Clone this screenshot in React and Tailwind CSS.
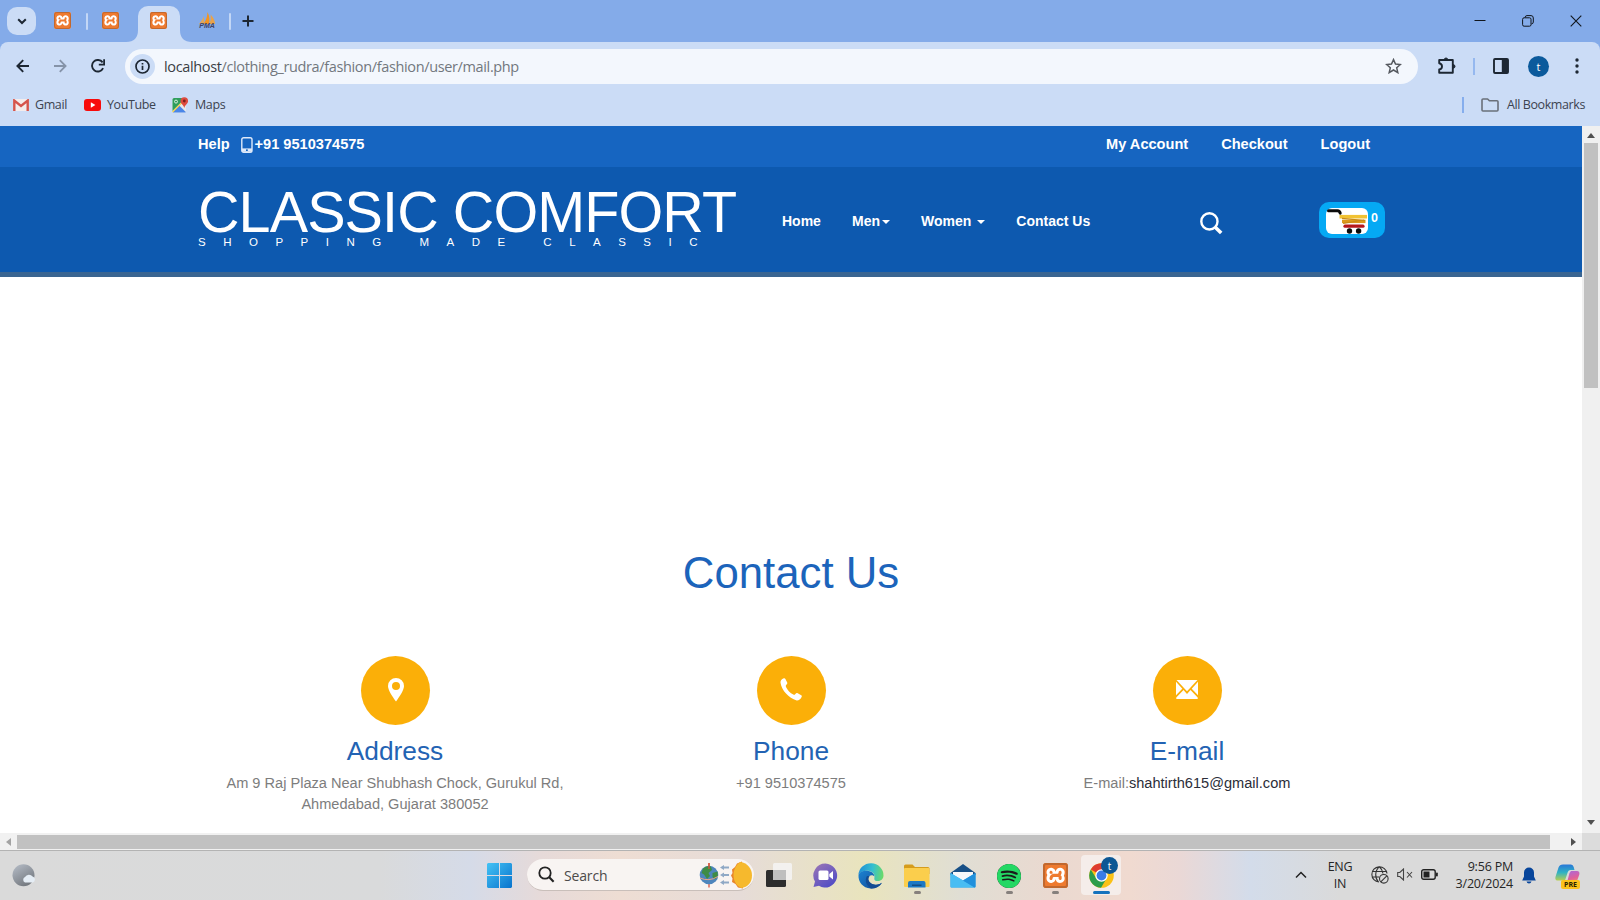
import { SiXampp, SiSpotify } from "react-icons/si";

function XamppIcon({ className, frame = "border" }) {
  return (
    <div className={`relative shrink-0 rounded-[3px] bg-white ${className}`}>
      <SiXampp className="block h-full w-full text-[#ee7a2f]" />
      <div className={`absolute inset-0 rounded-[3px] border-[#c0682f] ${frame}`} />
    </div>
  );
}

function PmaIcon() {
  return (
    <div className="flex h-[18px] w-[20px] flex-col items-center justify-end">
      <svg width="18" height="12" viewBox="0 0 18 12" className="-mb-px block shrink-0">
        <path d="M1 12 Q5 7 5.800 4 L6.500 12Z" fill="#e2a85c" />
        <path d="M5.500 12 Q9.500 6 9.500 0 Q12.500 6 11 12Z" fill="#f5941f" />
        <path d="M11.500 12 Q13.500 7 12.600 2.500 Q16.800 7 17 12Z" fill="#e9a24a" />
      </svg>
      <span className="font-['Liberation_Sans'] text-[7px] leading-[6px] font-bold italic text-[#3f4468]">PMA</span>
    </div>
  );
}

function TabStrip() {
  return (
    <div className="flex h-[42px] items-start bg-[#84abe9]">
      <div className="mt-[7px] ml-[7px] flex h-[28px] w-[29px] shrink-0 items-center justify-center rounded-[10px] bg-[#cbdcf6]">
        <svg width="10" height="7" viewBox="0 0 10 7" fill="none" stroke="#1d2733" strokeWidth="2">
          <path d="M1.2 1.2 L5 5 L8.8 1.2" />
        </svg>
      </div>
      <XamppIcon className="mt-[12px] ml-[18px] h-[17px] w-[17px]" />
      <div className="mt-[13px] ml-[15px] h-[17px] w-[2px] rounded bg-[#c3d7f6]" />
      <XamppIcon className="mt-[12px] ml-[14px] h-[17px] w-[17px]" />
      <div className="mt-[6px] ml-[7px] flex h-[36px] items-end">
        <svg width="12" height="12" viewBox="0 0 12 12" className="block"><path d="M12 0 V12 H0 Q12 12 12 0Z" fill="#cbdcf6" /></svg>
        <div className="flex h-[36px] w-[42px] justify-center rounded-t-[10px] bg-[#cbdcf6] pt-[6px] pr-[1px]">
          <XamppIcon className="h-[17px] w-[17px]" />
        </div>
        <svg width="12" height="12" viewBox="0 0 12 12" className="block"><path d="M0 0 V12 H12 Q0 12 0 0Z" fill="#cbdcf6" /></svg>
      </div>
      <div className="mt-[11px] ml-[5px]"><PmaIcon /></div>
      <div className="mt-[13px] ml-[12px] h-[17px] w-[2px] rounded bg-[#c3d7f6]" />
      <svg width="12" height="12" viewBox="0 0 12 12" className="mt-[15px] ml-[11px]" stroke="#1d2733" strokeWidth="2">
        <path d="M6 0.5V11.5M0.5 6H11.5" />
      </svg>
      <div className="mt-[15px] mr-[18px] ml-auto flex items-center gap-[36px]">
        <svg width="12" height="12" viewBox="0 0 12 12" stroke="#10151c"><path d="M0.5 5.5H11.5" /></svg>
        <svg width="12" height="12" viewBox="0 0 12 12" fill="none" stroke="#10151c">
          <rect x="0.6" y="2.8" width="8.4" height="8.4" rx="1.5" />
          <path d="M3 2.6 Q3.2 0.6 5 0.6 H9 Q11.3 0.6 11.3 3 V7 Q11.3 8.8 9.4 9" />
        </svg>
        <svg width="12" height="12" viewBox="0 0 12 12" stroke="#10151c" strokeWidth="1.1"><path d="M0.7 0.7 L11.3 11.3M11.3 0.7 L0.7 11.3" /></svg>
      </div>
    </div>
  );
}

function Toolbar() {
  return (
    <div className="flex h-[48px] items-center bg-[#cbdcf6]">
      <svg width="13" height="14" viewBox="0 0 13 14" className="ml-[16px]" fill="none" stroke="#1d2733" strokeWidth="1.9">
        <path d="M13 7H1.6M7.2 1.2L1.4 7L7.2 12.8" />
      </svg>
      <svg width="13" height="14" viewBox="0 0 13 14" className="ml-[25px]" fill="none" stroke="#8593a8" strokeWidth="1.8">
        <path d="M0 7H11.4M5.8 1.2L11.6 7L5.8 12.8" />
      </svg>
      <svg width="14" height="14" viewBox="0 0 14 14" className="ml-[24px]" fill="none" stroke="#1d2733" strokeWidth="1.9">
        <path d="M12.1 9.2A5.8 5.8 0 1 1 11.6 3.4" />
        <path d="M13.1 0.2V5.6H7.8" strokeWidth="1.8" />
      </svg>
      <div className="ml-[20px] flex h-[35px] w-[1293px] items-center rounded-full bg-[#f3f7fd]">
        <div className="ml-[5px] flex h-[25px] w-[25px] items-center justify-center rounded-full bg-[#cbdcf6]">
          <svg width="15" height="15" viewBox="0 0 15 15" fill="none" stroke="#1d2733">
            <circle cx="7.5" cy="7.5" r="6.5" strokeWidth="1.7" />
            <path d="M7.5 6.7V11M7.5 3.9V5.5" strokeWidth="1.7" />
          </svg>
        </div>
        <span className="mt-[1px] ml-[9px] text-[14.5px] leading-5 tracking-[-0.36px] whitespace-nowrap text-[#72777e]">
          <span className="text-[#3a3e44]">localhost</span>/clothing_rudra/fashion/fashion/user/mail.php
        </span>
        <svg width="17" height="16" viewBox="0 0 17 16" className="mr-[16px] ml-auto" fill="none" stroke="#55595f" strokeWidth="1.5">
          <path d="M8.5 1.6L10.5 6.1L15.4 6.5L11.7 9.8L12.8 14.6L8.5 12L4.2 14.6L5.3 9.8L1.6 6.5L6.5 6.1Z" />
        </svg>
      </div>
      <svg width="18" height="18" viewBox="0 0 18 18" className="ml-[20px]" fill="none" stroke="#1d2733" strokeWidth="1.9" strokeLinejoin="round">
        <path d="M1.2 3H14.8V15.8H1.2V12.5Q4 12 4 9.4Q4 6.8 1.2 6.2Z" />
        <path d="M6.2 2.6Q6.4 1 8 1Q9.6 1 9.8 2.6Z M15.2 7.6Q17 7.8 17 9.4Q17 11 15.2 11.2Z" fill="#1d2733" strokeWidth="1" />
      </svg>
      <div className="ml-[17px] h-[17px] w-[2px] bg-[#95b8ef]" />
      <svg width="16" height="16" viewBox="0 0 16 16" className="ml-[18px]">
        <rect x="1" y="1" width="14" height="14" rx="1" fill="none" stroke="#1d2733" strokeWidth="1.9" />
        <rect x="8.8" y="1" width="6.2" height="14" fill="#1d2733" />
      </svg>
      <div className="ml-[19px] flex h-[21px] w-[21px] items-center justify-center rounded-full bg-[#0b5a9c] text-[11px] leading-none text-white">t</div>
      <svg width="4" height="16" viewBox="0 0 4 16" className="ml-[26px]" fill="#1d2733">
        <circle cx="2" cy="2" r="1.7" /><circle cx="2" cy="8" r="1.7" /><circle cx="2" cy="14" r="1.7" />
      </svg>
    </div>
  );
}

function Bookmarks() {
  return (
    <div className="flex h-[36px] items-center bg-[#cbdcf6] pb-[6px] text-[12.5px] leading-4 tracking-[-0.4px] text-[#3c4350]">
      <svg width="16" height="12" viewBox="0 0 16 12" className="ml-[13px]">
        <rect x="0" y="0" width="16" height="12" rx="1" fill="#f4ecec" />
        <path d="M1.3 12V1.6L8 7L14.7 1.6V12" fill="none" stroke="#d5544c" strokeWidth="2.4" />
      </svg>
      <span className="ml-[6px] w-[49px]">Gmail</span>
      <svg width="17" height="12" viewBox="0 0 17 12" className="block">
        <rect width="17" height="12" rx="3" fill="#f80b0b" />
        <path d="M6.8 3.3V8.7L11.4 6Z" fill="#fff" />
      </svg>
      <span className="ml-[6px] w-[65px]">YouTube</span>
      <svg width="17" height="16" viewBox="0 0 17 16">
        <rect x="0.5" y="1" width="13.5" height="14.5" rx="1.5" fill="#e6e9ea" />
        <path d="M0.5 2.5Q0.5 1 2 1H10L9.5 5L0.5 14Z" fill="#2f9e5c" />
        <path d="M0.8 15L7.2 8.5L13.8 15Q13.4 15.5 12.8 15.5H2Q1 15.5 0.8 15Z" fill="#4a86e8" />
        <path d="M0.5 15L11 4.5" stroke="#f5d04a" strokeWidth="1.2" />
        <path d="M12.3 0.2A3.8 3.8 0 0 1 16.1 4C16.1 6.5 13.2 7.6 12.3 11C11.4 7.6 8.5 6.5 8.5 4A3.8 3.8 0 0 1 12.3 0.2Z" fill="#dd4b3e" />
        <circle cx="12.3" cy="4" r="1.4" fill="#7c2019" />
        <circle cx="4" cy="4.6" r="1.5" fill="none" stroke="#e9f4ec" strokeWidth="0.9" />
      </svg>
      <span className="ml-[6px]">Maps</span>
      <div className="mr-[17px] ml-auto h-[16px] w-[2px] bg-[#86aeed]" />
      <svg width="18" height="14" viewBox="0 0 18 14" fill="none" stroke="#6a707a" strokeWidth="1.6" strokeLinejoin="round">
        <path d="M1 12V2Q1 1 2 1H6.6L8.4 2.8H16Q17 2.8 17 3.8V12Q17 13 16 13H2Q1 13 1 12Z" />
      </svg>
      <span className="mr-[15px] ml-[8px]">All Bookmarks</span>
    </div>
  );
}

function Caret({ className }) {
  return (
    <svg width="8" height="4" viewBox="0 0 8 4" className={className}><path d="M0 0H8L4 4Z" fill="#fff" /></svg>
  );
}

function SiteHeader() {
  return (
    <>
      <div className="flex h-[41px] items-center bg-[#1665c1] pb-[3px] pl-[198px] text-[14.58px] font-bold text-white">
        <span>Help</span>
        <svg width="12" height="16" viewBox="0 0 12 16" className="ml-[11px]">
          <rect x="0.8" y="0.8" width="10.200" height="14.4" rx="1.8" fill="none" stroke="#dfeafa" strokeWidth="1.4" />
          <path d="M1 11.4H11V14.8H1Z" fill="#dfeafa" />
          <rect x="5" y="12.4" width="1.8" height="1.6" fill="#1665c1" />
        </svg>
        <span className="ml-[2px]">+91 9510374575</span>
        <div className="mr-[212px] ml-auto flex gap-[33px]">
          <span>My Account</span>
          <span>Checkout</span>
          <span>Logout</span>
        </div>
      </div>
      <div className="flex h-[110px] items-start border-b-[5px] border-[#3a6591] bg-[#0d59af] pl-[198px] text-[14px] font-bold text-white">
        <div className="w-[584px] pt-[18px] font-normal">
          <div className="text-[57.5px] leading-[54px] tracking-[-0.9px] whitespace-nowrap">CLASSIC COMFORT</div>
          <div className="-mt-[4px] text-[11.5px] leading-[14px] tracking-[17.5px] whitespace-nowrap">SHOPPING MADE CLASSIC</div>
        </div>
        <nav className="flex items-center pt-[44px] leading-[20px]">
          <span className="w-[70px]">Home</span>
          <span>Men</span>
          <Caret className="mt-[2px] ml-[2px]" />
          <span className="ml-[31px]">Women</span>
          <Caret className="mt-[2px] ml-[6px]" />
          <span className="ml-[31px]">Contact Us</span>
        </nav>
        <svg width="23" height="23" viewBox="0 0 23 23" className="mt-[45px] ml-[110px]" fill="none" stroke="#fff">
          <circle cx="9.4" cy="9.4" r="8.1" strokeWidth="2.4" />
          <path d="M15 15L21.2 21" strokeWidth="3.6" />
        </svg>
        <div className="mt-[35px] mr-[197px] ml-auto flex h-[36px] w-[66px] items-center rounded-[10px] bg-[#05a9f4] pt-[2px] pl-[7px]">
          <svg width="42" height="26" viewBox="0 0 42 26">
            <rect width="42" height="26" rx="6" fill="#fff" />
            <path d="M2.5 2.7H11.5Q13.6 2.8 14.2 5.2" fill="none" stroke="#0c0c0c" strokeWidth="3" strokeLinecap="round" />
            <path d="M13.5 8.7H41" stroke="#f1c232" strokeWidth="3.6" />
            <path d="M16 13.4H39.5" stroke="#dc9a1c" strokeWidth="3.4" />
            <path d="M16 10.4L39 12.6M17 15.4L38 12" stroke="#c98a16" strokeWidth="1.2" />
            <path d="M19 18.2H37" stroke="#b5171c" strokeWidth="3.2" strokeLinecap="round" />
            <circle cx="23.5" cy="23" r="2.7" fill="#0c0c0c" /><circle cx="32.6" cy="23" r="2.7" fill="#0c0c0c" />
          </svg>
          <span className="-mt-[6px] ml-[3px] text-[12.5px]">0</span>
        </div>
      </div>
    </>
  );
}

function ContactCard({ icon, title, children }) {
  return (
    <div className="flex w-[396px] flex-col items-center text-center">
      <div className="flex h-[69px] w-[69px] items-center justify-center rounded-full bg-[#fbaf08] pb-[2px]">{icon}</div>
      <h2 className="mt-[11px] text-[26.3px] leading-[30px] text-[#2363b3]">{title}</h2>
      <p className="mt-[7px] text-[14.58px] leading-[21px] text-[#7d7d7d]">{children}</p>
    </div>
  );
}

function SitePage() {
  return (
    <div className="flex w-[1582px] flex-col bg-white font-['Liberation_Sans',sans-serif]">
      <SiteHeader />
      <h1 className="mt-[271px] text-center text-[43.75px] leading-[50px] text-[#1c64bb]">Contact Us</h1>
      <div className="mt-[58px] flex justify-center">
        <ContactCard
          title="Address"
          icon={
            <svg width="16" height="24" viewBox="0 0 16 24" className="ml-[1px]">
              <path fillRule="evenodd" d="M8 0A8 8 0 0 1 16 8C16 12 12 18 8 23.500C4 18 0 12 0 8A8 8 0 0 1 8 0ZM8 4A4 4 0 1 0 8 12A4 4 0 1 0 8 4Z" fill="#fff" />
            </svg>
          }
        >
          Am 9 Raj Plaza Near Shubhash Chock, Gurukul Rd,<br />Ahmedabad, Gujarat 380052
        </ContactCard>
        <ContactCard
          title="Phone"
          icon={
            <svg width="22" height="23" viewBox="0 0 22 23" className="-ml-[1px]">
              <path d="M3.800 0.300C4.600 0 5 0.300 5.400 1L7.200 4.500C7.500 5.300 7.200 6 6.300 6.700C5.700 7.300 5.700 8 6 8.900C7.500 12.200 10.200 14.800 13.300 16.500C14.200 17 14.700 16.800 15.400 15.900C16.200 15 16.900 14.900 17.700 15.300L21.200 17.200C21.900 17.600 22 18.200 21.600 19C20.600 21.200 18.700 22.700 16.700 22.500C8.600 19.900 1.800 12.700 0.500 4.800C0.300 2.800 1.500 1 3.800 0.300Z" fill="#fff" />
            </svg>
          }
        >
          +91 9510374575
        </ContactCard>
        <ContactCard
          title="E-mail"
          icon={
            <svg width="22" height="19" viewBox="0 0 22 19" fill="#fff">
              <path d="M0.500 0H21.500L11 11.300Z" />
              <path d="M0 1.700L6.300 8.700L0 15.300Z" />
              <path d="M22 1.700L15.700 8.700L22 15.300Z" />
              <path d="M0.300 17.600L7.500 10.100L11 14L14.500 10.100L21.700 17.600V19H0.300Z" />
            </svg>
          }
        >
          E-mail:<span className="text-[#2b2d38]">shahtirth615@gmail.com</span>
        </ContactCard>
      </div>
    </div>
  );
}

function Scrollbars() {
  return (
    <div className="flex w-[18px] flex-col items-center bg-[#f0f0f0]">
      <svg width="8" height="5" viewBox="0 0 8 5" className="mt-[7px] shrink-0"><path d="M0 5H8L4 0Z" fill="#505050" /></svg>
      <div className="mt-[5px] h-[245px] w-[14px] bg-[#c1c1c1]" />
      <svg width="8" height="5" viewBox="0 0 8 5" className="mt-auto mb-[8px] shrink-0"><path d="M0 0H8L4 5Z" fill="#505050" /></svg>
    </div>
  );
}

function TaskItem({ children, running }) {
  return (
    <div className="flex h-full w-[46px] flex-col items-center pt-[12px]">
      <div className="flex h-[25px] items-center">{children}</div>
      {running && <div className="mt-[3px] h-[3px] w-[7px] rounded-full bg-[#86807d]" />}
    </div>
  );
}

function Taskbar() {
  return (
    <div className="flex h-[50px] shrink-0 items-start border-t border-[#b3b3b3] bg-[linear-gradient(90deg,#dadada_0px,#d9dadb_380px,#d5dbe8_470px,#e6dad9_540px,#eeddd3_620px,#e6dcd8_740px,#e9e4bd_865px,#e0ded4_960px,#ead9d0_1050px,#f0dad0_1130px,#ead8d6_1180px,#d3dcea_1250px,#dadada_1340px,#dadada_1600px)]">
      <svg width="25" height="23" viewBox="0 0 25 23" className="mt-[13px] ml-[12px]">
        <defs><linearGradient id="moon" x1="0" y1="0" x2="0.6" y2="1"><stop stopColor="#b7bec9" /><stop offset="1" stopColor="#74797f" /></linearGradient></defs>
        <circle cx="11.5" cy="11.3" r="11" fill="url(#moon)" />
        <path d="M13 18.5A3 3 0 0 1 13 13A4.6 4.6 0 0 1 20.6 12.5A3.2 3.2 0 0 1 21 18.5Z" fill="#e5edf5" />
      </svg>
      <svg width="25" height="25" viewBox="0 0 25 25" className="mt-[12px] ml-[450px]">
        <defs><linearGradient id="win" x1="0" y1="0" x2="1" y2="1"><stop stopColor="#44c3f5" /><stop offset="1" stopColor="#0873cd" /></linearGradient></defs>
        <path d="M1 0H12V12H0V1ZM13 0H24L25 1V12H13ZM0 13H12V25H1L0 24ZM13 13H25V24L24 25H13Z" fill="url(#win)" />
      </svg>
      <div className="mt-[8px] ml-[15px] flex h-[32px] w-[227px] items-center rounded-full border-b border-[#c9bfba] bg-[#f8f4f2]">
        <svg width="17" height="17" viewBox="0 0 17 17" className="ml-[11px]" fill="none" stroke="#222" strokeWidth="1.8">
          <circle cx="7" cy="7" r="5.7" /><path d="M11 11L15.6 15.8" strokeWidth="2.1" />
        </svg>
        <span className="mt-[2px] ml-[9px] text-[14px] leading-5 tracking-[-0.15px] text-[#4d4b4a]">Search</span>
        <svg width="54" height="28" viewBox="0 0 54 28" className="mr-[1px] ml-auto">
          <path d="M10 2V26.500" stroke="#d9533c" strokeWidth="1.3" />
          <circle cx="10" cy="14" r="9.3" fill="#4e86bd" />
          <path d="M4 7.600Q8 4 12 5.500L13 9L9.500 12L11 15L8 18L5 13.500L2.500 12ZM13.500 12L18.500 10.500L18.800 15L16 18.500L13.500 16Z" fill="#3f8c46" />
          <path d="M1 17Q10 21 19 15.500" fill="none" stroke="#e8a38d" strokeWidth="1" />
          <path d="M10 2V8" stroke="#d9533c" strokeWidth="1.3" />
          <g fill="#8fa9c6"><path d="M21 6.500L25 4V5.500H30V7.500H25V9ZM21 14L25 11.500V13H30V15H25V16.500ZM21 21.500L25 19V20.500H30V22.500H25V24Z" /></g>
          <path d="M43 0.500L38 2.500L36 6L33 8.500L33.500 12L32 14.500L33.500 17.500L33 21L36.500 23L39 26.500L44 27.500Z" fill="#e8852b" />
          <path d="M41 1C49 2 53 8 53 14.500C53 21 49 26.500 42 27C36.500 24 34.500 19 34.500 14C34.500 9 37 4 41 1Z" fill="#f6b92d" />
        </svg>
      </div>
      <div className="ml-[2px] flex h-full">
        <TaskItem>
          <svg width="26" height="25" viewBox="0 0 26 25">
            <rect x="0" y="7" width="20" height="17" rx="1.5" fill="#2d2d2d" />
            <rect x="7" y="0" width="19" height="17" rx="1.500" fill="#f4f4f4" fillOpacity="0.85" />
            <rect x="7" y="7" width="13" height="10" fill="#bfbfbf" />
          </svg>
        </TaskItem>
        <TaskItem>
          <svg width="25" height="25" viewBox="0 0 25 25">
            <defs><linearGradient id="chat" x1="0" y1="0" x2="0.7" y2="1"><stop stopColor="#9d77b5" /><stop offset="1" stopColor="#514cc5" /></linearGradient></defs>
            <path d="M12.500 0.500A12 12 0 1 1 6 22.800L0.500 24L2 18.500A12 12 0 0 1 12.500 0.500Z" fill="url(#chat)" />
            <rect x="5.500" y="7.500" width="10" height="9.500" rx="1.500" fill="#fff" /><path d="M16.300 11L20 8V16.500L16.300 13.500Z" fill="#fff" />
          </svg>
        </TaskItem>
        <TaskItem>
          <svg width="26" height="26" viewBox="0 0 26 26">
            <defs>
              <linearGradient id="edgeTop" x1="0" y1="0.4" x2="1" y2="0.5"><stop stopColor="#1f8fd6" /><stop offset="0.55" stopColor="#35bfd0" /><stop offset="1" stopColor="#6bdb68" /></linearGradient>
              <linearGradient id="edgeLow" x1="0" y1="0" x2="1" y2="1"><stop stopColor="#1b83d2" /><stop offset="1" stopColor="#124a95" /></linearGradient>
            </defs>
            <path d="M0.500 12A12.500 12 0 0 1 25.500 12.500C25.500 16.500 22 18.500 18.500 18C15.500 17.500 16.500 15.500 16.500 13C16 9 12 7.500 8 7.800C4 8.200 1 10 0.500 12Z" fill="url(#edgeTop)" />
            <path d="M0.500 12C1.500 8.500 6 7.500 9 7.800C14 8.200 16.500 11 16.300 13.500C15 11.500 11 11.500 10 15C9.500 19 13.500 22.500 19 21.800Q22 21.300 24 19.800C21.500 24 17 26 12.500 25.500C5 25 0 19 0.500 12Z" fill="url(#edgeLow)" />
            <path d="M9 13C6.500 17 8 22.500 13 25.500C17.500 25.700 21.500 23.500 24 19.800C19 23.500 11.500 21.500 10.500 16.500Q10.400 14.500 11.500 13Z" fill="#134c93" />
          </svg>
        </TaskItem>
        <TaskItem running>
          <svg width="26" height="24" viewBox="0 0 26 24">
            <path d="M0 2Q0 0.500 1.500 0.500H8.500L11 3H24Q25.500 3 25.500 4.500V10H0Z" fill="#d59c1c" />
            <rect x="0" y="4" width="25.500" height="19" rx="1" fill="#fbce4c" />
            <path d="M4 23.500V19Q4 17 6 17H19.500Q21.500 17 21.500 19V23.500Z" fill="#1d79c4" /><rect x="8" y="20.500" width="9.500" height="1.500" fill="#124f86" />
          </svg>
        </TaskItem>
        <TaskItem>
          <svg width="26" height="24" viewBox="0 0 26 24">
            <path d="M0.500 9L13 0L25.500 9V11H0.500Z" fill="#174f86" />
            <path d="M3 8H23V14L13 18L3 14Z" fill="#f5f7fa" />
            <path d="M0.500 9L13 16.500L25.500 9V22.500Q25.500 23.500 24.500 23.500H1.500Q0.500 23.500 0.500 22.500Z" fill="#2d9fe6" />
            <path d="M0.500 9L25 23.500H1.500Q0.500 23.500 0.500 22.500Z" fill="#48bdf3" />
            <path d="M13 16.500L25.500 9V22.500Q25.500 23.500 24.500 23.500Z" fill="#2090dc" />
          </svg>
        </TaskItem>
        <TaskItem running>
          <div className="rounded-full bg-[#1b1b1b]"><SiSpotify className="block h-[24px] w-[24px] text-[#24d864]" /></div>
        </TaskItem>
        <TaskItem running><XamppIcon className="h-[25px] w-[25px]" frame="border-2" /></TaskItem>
        <div className="relative mt-[4px] ml-[3px] flex h-[40px] w-[40px] flex-col items-center rounded-[4px] bg-[#f5edea] pt-[8px]">
          <svg width="25" height="25" viewBox="0 0 25 25">
            <circle cx="12.500" cy="12.500" r="12.300" fill="#fbc116" />
            <path d="M12.500 12.500L1.800 6.400A12.300 12.300 0 0 1 23.200 6.400Z" fill="#de3b30" />
            <path d="M1.800 6.400A12.300 12.300 0 0 0 12 24.800L17.500 15.500L12.500 12.500L7.300 15.500Z" fill="#2c9d4b" />
            <circle cx="12.500" cy="12.500" r="6.200" fill="#fff" /><circle cx="12.500" cy="12.500" r="4.900" fill="#3a7ce8" />
          </svg>
          <div className="mt-[3px] h-[3px] w-[17px] rounded-full bg-[#1672bd]" />
          <div className="absolute top-[2px] left-[20px] flex h-[17px] w-[17px] items-center justify-center rounded-full bg-[#0d5794] text-[10px] leading-none text-white">t</div>
        </div>
      </div>
      <svg width="12" height="8" viewBox="0 0 12 8" className="mt-[20px] ml-[174px]" fill="none" stroke="#222" strokeWidth="1.500"><path d="M1 6.500L6 1.500L11 6.500" /></svg>
      <div className="mt-[8px] ml-[18px] w-[30px] text-center text-[12.5px] leading-[16.5px] tracking-[-0.3px] text-[#262626]">ENG<br />IN</div>
      <svg width="18" height="18" viewBox="0 0 18 18" className="mt-[15px] ml-[16px]" fill="none" stroke="#333" strokeWidth="1.1">
        <path d="M16 7.500A7.600 7.600 0 1 0 8 16M8.300 0.800C3.500 5 3.800 12 7.500 16M8.300 0.800C11 3 11.700 5 12 7.500M1.200 5.500H15.500M1.200 11H8" />
        <circle cx="12.800" cy="12.800" r="4.300" /><path d="M9.800 15.800L15.800 9.800" />
      </svg>
      <svg width="16" height="13" viewBox="0 0 16 13" className="mt-[17px] ml-[8px]" fill="none" stroke="#444" strokeWidth="1.100">
        <path d="M0.700 4.500H2.800L6.500 1V12L2.800 8.500H0.700Z" /><path d="M10 4L15 9.500M15 4L10 9.500" />
      </svg>
      <svg width="17" height="11" viewBox="0 0 17 11" className="mt-[18px] ml-[8px]">
        <rect x="0.700" y="0.700" width="13.500" height="9.600" rx="2" fill="none" stroke="#222" strokeWidth="1.400" />
        <rect x="2.500" y="2.500" width="6" height="6" fill="#222" /><rect x="15" y="3.500" width="1.800" height="4" rx="0.800" fill="#222" />
      </svg>
      <div className="mt-[7px] ml-[10px] w-[65px] text-right text-[12.5px] leading-[17px] tracking-[-0.2px] whitespace-nowrap text-[#262626]">9:56 PM<br />3/20/2024</div>
      <svg width="14" height="17" viewBox="0 0 14 17" className="mt-[16px] ml-[9px]" fill="#07459b">
        <path d="M7 0.500A5 5 0 0 1 12 5.500V9.500L13.800 13.500H0.200L2 9.500V5.500A5 5 0 0 1 7 0.500ZM4.500 14.500H9.500Q9 16.500 7 16.500Q5 16.500 4.500 14.500Z" />
      </svg>
      <div className="relative mt-[13px] ml-[19px] h-[25px] w-[25px]">
        <svg width="25" height="22" viewBox="0 0 25 22">
          <defs>
            <linearGradient id="copA" x1="0" y1="0" x2="0" y2="1"><stop stopColor="#2877d8" /><stop offset="0.5" stopColor="#30b2c4" /><stop offset="1" stopColor="#b8cf52" /></linearGradient>
            <linearGradient id="copB" x1="0" y1="0" x2="0.300" y2="1"><stop stopColor="#a46ae0" /><stop offset="0.600" stopColor="#e0609a" /><stop offset="1" stopColor="#f09a62" /></linearGradient>
          </defs>
          <path d="M8 0.500H16Q18 0.500 18.700 3L19.500 6H15.500Q13.500 6 12.800 8L10 16.500H3Q-0.500 16.500 0.600 12.500L3.500 3.500Q4.500 0.500 8 0.500Z" fill="url(#copA)" />
          <path d="M16 7H22Q25 7 24.300 10.500L21.500 18.500Q20.500 21.500 17.500 21.500H9Q11.500 20 12.500 16.500L14.500 9Z" fill="url(#copB)" />
        </svg>
        <div className="absolute top-[16px] left-[6px] flex h-[9px] w-[19px] items-center justify-center rounded-[2px] bg-[#fcc21b] text-[7px] leading-none font-bold text-[#2a2200]">PRE</div>
      </div>
    </div>
  );
}

export default function App() {
  return (
    <div className="flex h-[900px] w-[1600px] flex-col overflow-hidden bg-white font-['Open_Sans',sans-serif]">
      <div className="bg-[#84abe9]">
        <TabStrip />
        <div className="overflow-hidden rounded-t-[8px]"><Toolbar /></div>
      </div>
      <Bookmarks />
      <div className="flex h-[707px] shrink-0 overflow-hidden">
        <SitePage />
        <Scrollbars />
      </div>
      <div className="flex h-[17px] shrink-0 items-center bg-[#f1f1f1]">
        <svg width="5" height="8" viewBox="0 0 5 8" className="ml-[6px]"><path d="M5 0V8L0 4Z" fill="#a3a3a3" /></svg>
        <div className="ml-[6px] h-[14px] w-[1533px] bg-[#c1c1c1]" />
        <svg width="5" height="8" viewBox="0 0 5 8" className="ml-[21px]"><path d="M0 0V8L5 4Z" fill="#505050" /></svg>
        <div className="ml-auto h-[17px] w-[18px] bg-[#dcdcdc]" />
      </div>
      <Taskbar />
    </div>
  );
}
